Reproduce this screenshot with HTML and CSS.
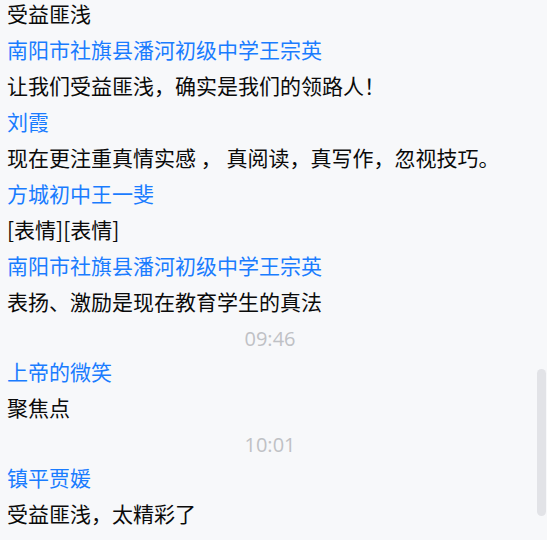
FILE: index.html
```html
<!DOCTYPE html>
<html lang="zh-CN">
<head>
    <meta charset="UTF-8">
    <meta name="viewport" content="width=device-width, initial-scale=1.0">
    <title>互动评论</title>
    <link rel="stylesheet" href="styles.css">
</head>
<body>
    <div class="chat-panel">
        <ul class="chat-list">
            <li class="msg-text">受益匪浅</li>
            <li class="msg-name">南阳市社旗县潘河初级中学王宗英</li>
            <li class="msg-text">让我们受益匪浅，确实是我们的领路人！</li>
            <li class="msg-name">刘霞</li>
            <li class="msg-text">现在更注重真情实感 ， 真阅读，真写作，忽视技巧。</li>
            <li class="msg-name">方城初中王一斐</li>
            <li class="msg-text">[表情][表情]</li>
            <li class="msg-name">南阳市社旗县潘河初级中学王宗英</li>
            <li class="msg-text">表扬、激励是现在教育学生的真法</li>
            <li class="msg-time">09:46</li>
            <li class="msg-name">上帝的微笑</li>
            <li class="msg-text">聚焦点</li>
            <li class="msg-time">10:01</li>
            <li class="msg-name">镇平贾媛</li>
            <li class="msg-text">受益匪浅，太精彩了</li>
        </ul>
        <div class="scroll-thumb"></div>
    </div>
</body>
</html>
```

FILE: styles.css
```css
body {
    margin: 0;
    background-color: #f7f8fa;
    font-family: "Noto Sans CJK SC", "Noto Sans", sans-serif;
}
.chat-panel {
    position: relative;
    height: 540px;
    overflow: hidden;
}
.chat-list {
    list-style: none;
    margin: 0;
    padding: 0 0 0 7px;
    width: 526px;
}
.chat-list li {
    font-size: 21px;
    line-height: 36px;
    height: 36px;
    white-space: nowrap;
}
/* top row is partly scrolled away */
.chat-list li:first-child {
    line-height: 26px;
    height: 31px;
}
.msg-text {
    color: #0a0a0a;
}
.msg-name {
    color: #1a7cff;
}
.chat-list .msg-time {
    height: 29px;
    line-height: 29px;
    padding-top: 5px;
    text-align: center;
    font-family: "Open Sans", "Liberation Sans", sans-serif;
    font-size: 20px;
    color: #bfc1c5;
}
.scroll-thumb {
    position: absolute;
    right: 1px;
    top: 369px;
    width: 9px;
    height: 147px;
    border-radius: 5px;
    background-color: #e2e3e7;
}
```
